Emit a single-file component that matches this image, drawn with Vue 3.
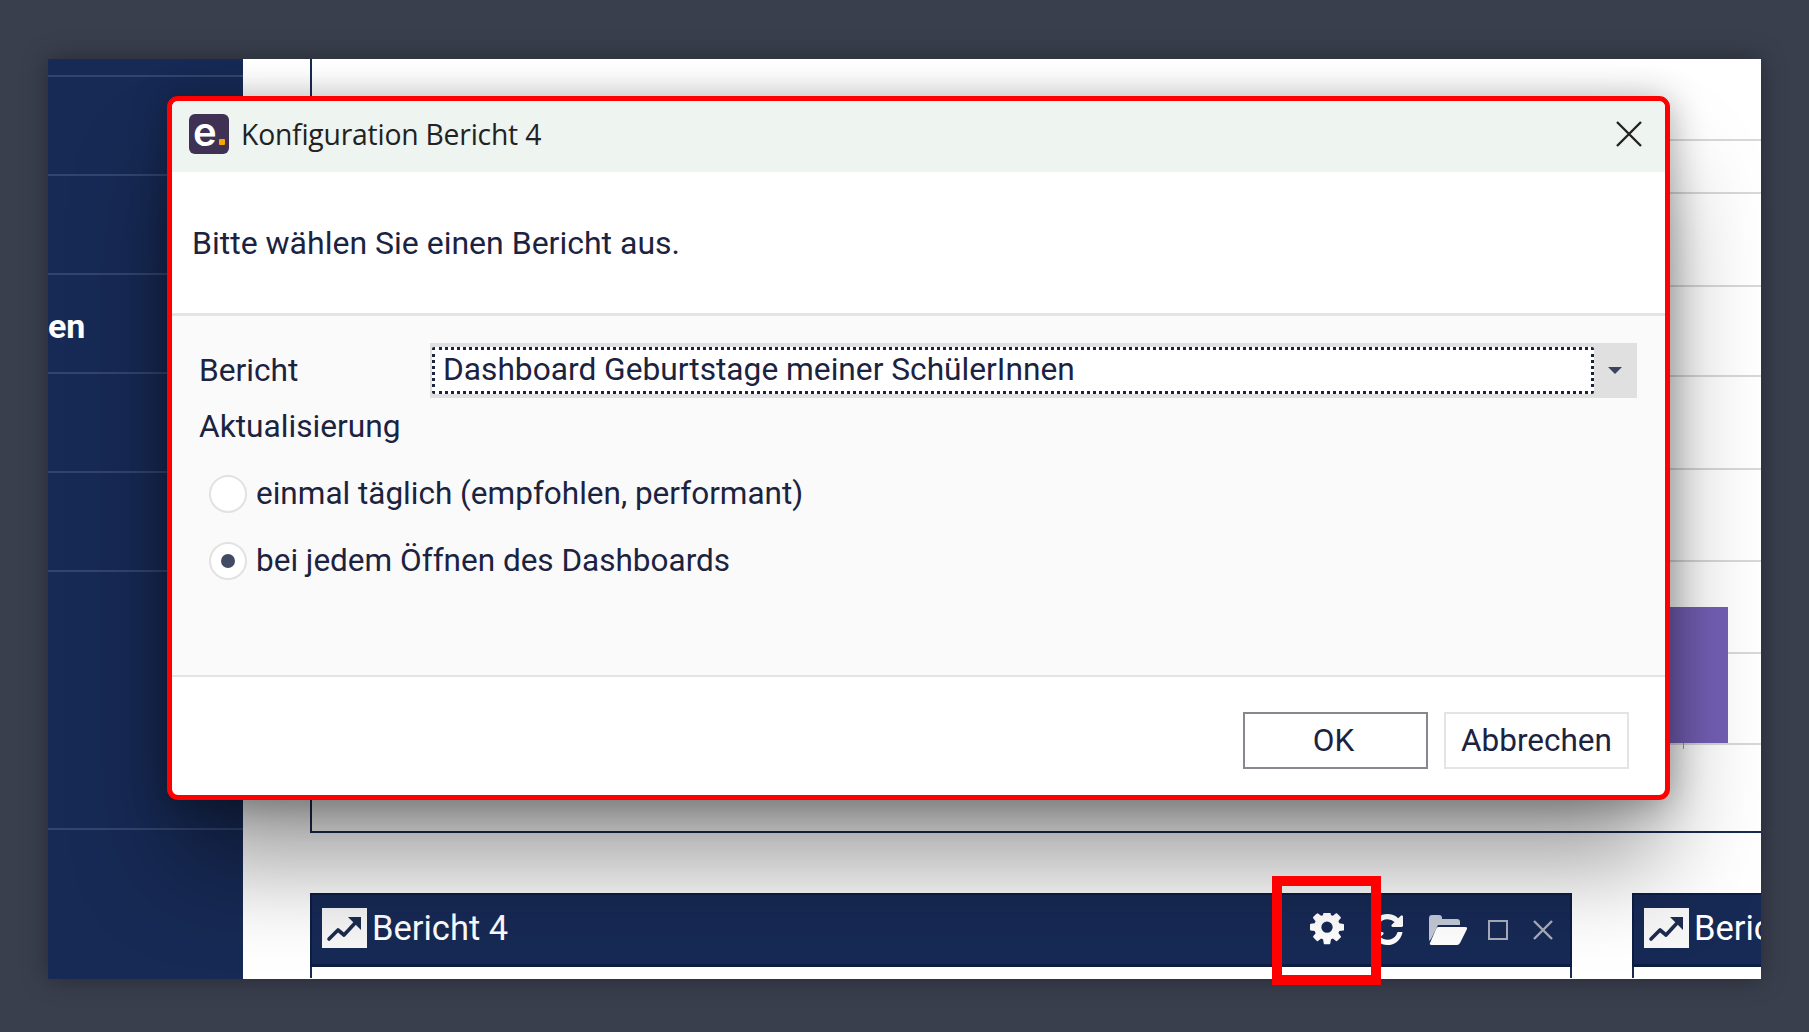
<script setup>
import { ref } from 'vue';

const sideRows = [
  { h: 18 }, { h: 99 }, { h: 99 }, { h: 99, label: 'en' }, { h: 99 }, { h: 99 }, { h: 258 }, { h: 149 }
];
// heights between the chart's horizontal grid lines
const gridRows = [82, 53, 93, 90, 93, 92, 92, 91];
const options = [
  { id: 'daily', label: 'einmal täglich (empfohlen, performant)' },
  { id: 'open', label: 'bei jedem Öffnen des Dashboards' }
];
const update = ref('open');
</script>

<template>
  <div class="page">
    <div class="screen">
      <aside class="sidebar">
        <div v-for="(row, i) in sideRows" :key="i" class="sidebar__row" :style="{ height: row.h + 'px' }">
          <span v-if="row.label">{{ row.label }}</span>
        </div>
      </aside>

      <main class="content">
        <section class="chart">
          <div v-for="(h, i) in gridRows" :key="i" class="chart__row" :style="{ height: h + 'px' }"></div>
          <div class="chart__bar"></div>
          <div class="chart__tick"></div>
        </section>

        <div class="panels">
          <section class="panel panel--main">
            <header class="panel__bar">
              <span class="panel__icon">
                <svg viewBox="0 0 45 40" width="45" height="40">
                  <path d="M7 31l9-9 6 5 12-13" fill="none" stroke="#1d2b4f" stroke-width="3.6" stroke-linecap="round" stroke-linejoin="round" />
                  <path d="M26 9h13v13z" fill="#1d2b4f" />
                </svg>
              </span>
              <span class="panel__title">Bericht 4</span>
              <div class="panel__tools">
                <svg class="tool tool--gear" viewBox="0 0 1536 1536" width="34" height="34">
                  <path fill="#fff" d="M1024 640q0-106-75-181t-181-75-181 75-75 181 75 181 181 75 181-75 75-181zm512-109v222q0 12-8 23t-20 13l-185 28q-19 54-39 91 35 50 107 138 10 12 10 25t-9 23q-27 37-99 108t-94 71q-12 0-26-9l-138-108q-44 23-91 38-16 136-29 186-7 28-36 28h-222q-14 0-24.500-8.500t-11.500-21.500l-28-184q-49-16-90-37l-141 107q-10 9-25 9-14 0-25-11-126-114-165-168-7-10-7-23 0-12 8-23 15-21 51-66.500t54-70.500q-27-50-41-99l-183-27q-13-2-21-12.500t-8-23.500v-222q0-12 8-23t19-13l186-28q14-46 39-92-40-57-107-138-10-12-10-24 0-10 9-23 26-36 98.500-107.500t94.500-71.500q13 0 26 10l138 107q44-23 91-38 16-136 29-186 7-28 36-28h222q14 0 24.500 8.500t11.500 21.500l28 184q49 16 90 37l142-107q9-9 24-9 13 0 25 10 129 119 165 170 7 8 7 22 0 12-8 23-15 21-51 66.500t-54 70.500q26 50 41 98l183 28q13 2 21 12.500t8 23.500z" />
                </svg>
                <svg class="tool tool--refresh" viewBox="0 0 1536 1536" width="31" height="31">
                  <path fill="#fff" d="M1511 928q0 5-1 7-64 268-268 434.500t-478 166.500q-146 0-282.500-55t-243.500-157l-129 129q-19 19-45 19t-45-19-19-45v-448q0-26 19-45t45-19h448q26 0 45 19t19 45-19 45l-137 137q71 66 161 102t187 36q134 0 250-65t186-179q11-17 53-117 8-23 30-23h192q13 0 22.500 9.500t9.500 22.500zm25-800v448q0 26-19 45t-45 19h-448q-26 0-45-19t-19-45 19-45l138-138q-148-137-349-137-134 0-250 65t-186 179q-11 17-53 117-8 23-30 23h-199q-13 0-22.500-9.500t-9.500-22.500v-7q65-268 270-434.500t480-166.500q146 0 284 55.500t245 156.500l130-129q19-19 45-19t45 19 19 45z" />
                </svg>
                <svg class="tool tool--folder" viewBox="0 0 38 30" width="38" height="30">
                  <path fill="#c3c9d6" d="M0 3q0-3 3-3h7q3 0 3 3v1h15q3 0 3 3v3H9L2 24l-2 2z" />
                  <path fill="#fff" d="M9 12h27q3 0 2 2l-7 14q-1 2-3 2H3q-3 0-2-2l6-14q1-2 2-2z" />
                </svg>
                <span class="tool tool--square"></span>
                <svg class="tool tool--close" viewBox="0 0 20 20" width="20" height="20">
                  <path d="M1 1l18 18M19 1L1 19" stroke="#a9aebb" stroke-width="2.4" fill="none" />
                </svg>
              </div>
            </header>
            <div class="panel__body"></div>
          </section>

          <section class="panel panel--next">
            <header class="panel__bar">
              <span class="panel__icon">
                <svg viewBox="0 0 45 40" width="45" height="40">
                  <path d="M7 31l9-9 6 5 12-13" fill="none" stroke="#1d2b4f" stroke-width="3.6" stroke-linecap="round" stroke-linejoin="round" />
                  <path d="M26 9h13v13z" fill="#1d2b4f" />
                </svg>
              </span>
              <span class="panel__title">Bericht 5</span>
            </header>
            <div class="panel__body"></div>
          </section>
        </div>
      </main>
    </div>

    <div class="dialog">
      <header class="dialog__head">
        <span class="logo"><span class="logo__e">e</span><i class="logo__dot"></i></span>
        <span class="dialog__title">Konfiguration Bericht 4</span>
        <svg class="dialog__close" viewBox="0 0 26 26" width="26" height="26">
          <path d="M1 1l24 24M25 1L1 25" stroke="#222" stroke-width="2.4" fill="none" />
        </svg>
      </header>

      <div class="dialog__intro">Bitte wählen Sie einen Bericht aus.</div>

      <div class="form">
        <div class="form__row">
          <label class="form__label">Bericht</label>
          <div class="select">
            <div class="select__value">Dashboard Geburtstage meiner SchülerInnen</div>
            <div class="select__arrow"><i></i></div>
          </div>
        </div>
        <div class="form__label form__label--group">Aktualisierung</div>
        <div v-for="opt in options" :key="opt.id" class="radio" @click="update = opt.id">
          <span class="radio__dot" :class="{ 'radio__dot--on': update === opt.id }"></span>
          <span>{{ opt.label }}</span>
        </div>
      </div>

      <footer class="dialog__foot">
        <button class="btn btn--primary">OK</button>
        <button class="btn">Abbrechen</button>
      </footer>
    </div>

    <div class="marker"></div>
  </div>
</template>

<style scoped>
.page {
  position: relative;
  width: 1809px;
  height: 1032px;
  overflow: hidden;
  box-sizing: border-box;
  padding: 59px 48px 53px;
  background: #3a3f4e;
  font-family: Roboto, "Liberation Sans", sans-serif;
  color: #1b2340;
}

.screen {
  display: flex;
  width: 1713px;
  height: 920px;
  overflow: hidden;
  background: #fff;
  box-shadow: 0 0 24px rgba(0, 0, 0, 0.35);
}

.sidebar {
  flex: 0 0 195px;
  background: #172a55;
  color: #fff;
}

.sidebar__row {
  display: flex;
  align-items: center;
  box-sizing: border-box;
  border-bottom: 2px solid #33456f;
  font-size: 34px;
  font-weight: 700;
  line-height: 1;
  padding-top: 4px;
}

.sidebar__row:last-child {
  border-bottom: 0;
}

.content {
  flex: 1;
  min-width: 0;
  padding-left: 67px;
  overflow: hidden;
}

.chart {
  position: relative;
  height: 774px;
  box-sizing: border-box;
  border-left: 2px solid #1a2a50;
  border-bottom: 2px solid #1a2a50;
  overflow: hidden;
}

.chart__row {
  box-sizing: border-box;
  border-bottom: 2px solid #d8d8d8;
}

.chart__bar {
  position: absolute;
  left: 1228px;
  top: 548px;
  width: 188px;
  height: 136px;
  background: #7460b6;
}

.chart__tick {
  position: absolute;
  left: 1371px;
  top: 684px;
  width: 1px;
  height: 6px;
  background: #999;
}

.panels {
  display: flex;
  gap: 60px;
  margin-top: 60px;
}

.panel {
  flex: none;
  display: flex;
  flex-direction: column;
  height: 85px;
}

.panel--main {
  width: 1262px;
}

.panel--next {
  width: 400px;
}

.panel__bar {
  display: flex;
  align-items: center;
  box-sizing: border-box;
  height: 74px;
  padding: 0 0 4px 10px;
  background: #172a55;
  border: 2px solid #0d1d44;
  border-bottom-width: 3px;
  color: #fff;
}

.panel__icon {
  display: block;
  width: 45px;
  height: 40px;
  margin-right: 5px;
  background: #f7f7f7;
}

.panel__title {
  font-size: 34.5px;
  line-height: 38px;
}

.panel__tools {
  display: flex;
  align-items: center;
  box-sizing: border-box;
  margin-left: auto;
  margin-right: 17px;
  height: 100%;
  padding-top: 4px;
}

.tool {
  display: block;
  flex: none;
}

.tool--gear {
  margin-right: 28px;
}

.tool--refresh {
  margin-right: 26px;
}

.tool--folder {
  margin-right: 21px;
}

.tool--square {
  box-sizing: border-box;
  width: 20px;
  height: 20px;
  margin-right: 25px;
  border: 2.5px solid #a9aebb;
}

.panel__body {
  flex: 1;
  border: 2px solid #1a2a50;
  border-width: 0 2px;
  background: #fff;
}

.dialog {
  position: absolute;
  left: 167px;
  top: 96px;
  display: flex;
  flex-direction: column;
  box-sizing: border-box;
  width: 1503px;
  height: 704px;
  border: 5px solid #f00;
  border-radius: 11px;
  background: #fff;
  box-shadow: 0 3px 36px rgba(0, 0, 0, 0.32), 0 70px 100px -8px rgba(0, 0, 0, 0.4);
}

.dialog__head {
  display: flex;
  align-items: center;
  flex: 0 0 71px;
  box-sizing: border-box;
  padding: 0 23px 5px 17px;
  background: #eef4f0;
  border-radius: 6px 6px 0 0;
}

.logo {
  position: relative;
  display: block;
  width: 40px;
  height: 40px;
  margin-right: 12px;
  border-radius: 6px;
  background: #3e3153;
  color: #fff;
}

.logo__e {
  display: block;
  padding-left: 4px;
  font-size: 40px;
  font-weight: 600;
  line-height: 35px;
  font-family: Inter, Roboto, sans-serif;
}

.logo__dot {
  position: absolute;
  right: 4px;
  bottom: 9px;
  width: 6px;
  height: 6px;
  background: #f5a800;
  border-radius: 1px;
}

.dialog__title {
  font-family: "Open Sans", Roboto, sans-serif;
  font-size: 28.3px;
  line-height: 34px;
  color: #222;
  letter-spacing: -0.2px;
}

.dialog__close {
  margin-left: auto;
}

.dialog__intro {
  flex: 0 0 144px;
  box-sizing: border-box;
  padding-left: 20px;
  display: flex;
  align-items: center;
  border-bottom: 3px solid #e4e4e4;
  font-size: 32px;
}

.form {
  flex: 1;
  box-sizing: border-box;
  padding: 27px 28px 0 27px;
  background: #fafafa;
  border-bottom: 2px solid #e4e4e4;
  font-size: 31.7px;
}

.form__row {
  display: flex;
  align-items: center;
}

.form__label {
  flex: 0 0 231px;
  line-height: 53px;
}

.form__label--group {
  height: 62px;
  line-height: 57px;
}

.select {
  flex: 1;
  display: flex;
  height: 55px;
  background: #e0e0e0;
  padding: 2px 0 2px 2px;
  box-sizing: border-box;
}

.select__value {
  flex: 1;
  box-sizing: border-box;
  background: #fff;
  border: 3px dotted #1b2340;
  border-radius: 2px;
  padding-left: 8px;
  line-height: 40px;
  margin: 2px 3px 2px 0;
}

.select__arrow {
  display: flex;
  align-items: center;
  justify-content: center;
  flex: 0 0 40px;
  padding-right: 4px;
  box-sizing: border-box;
}

.select__arrow i {
  display: block;
  border: 7px solid transparent;
  border-top: 7px solid #3c4360;
  border-bottom: 0;
}

.radio {
  display: flex;
  align-items: center;
  height: 67px;
  margin-left: 10px;
  gap: 9px;
  font-size: 31.5px;
}

.radio__dot {
  position: relative;
  display: block;
  flex: none;
  box-sizing: border-box;
  width: 38px;
  height: 38px;
  border: 2px solid #e2e2e2;
  border-radius: 50%;
  background: #fff;
}

.radio__dot--on::after {
  content: "";
  position: absolute;
  left: 10px;
  top: 10px;
  width: 14px;
  height: 14px;
  border-radius: 50%;
  background: #434a63;
}

.dialog__foot {
  flex: 0 0 118px;
  display: flex;
  justify-content: flex-end;
  gap: 16px;
  box-sizing: border-box;
  padding: 35px 36px 0 0;
}

.btn {
  box-sizing: border-box;
  width: 185px;
  height: 57px;
  background: #fff;
  border: 2px solid #e4e4e4;
  font: inherit;
  font-size: 31.5px;
  color: #1b2340;
  padding: 0;
}

.btn--primary {
  border-color: #86888e;
  padding-right: 4px;
}

.marker {
  position: absolute;
  left: 1272px;
  top: 876px;
  box-sizing: border-box;
  width: 109px;
  height: 109px;
  border: 10px solid #f00;
}
</style>

<style>
body {
  background: #3a3f4e;
}
</style>
